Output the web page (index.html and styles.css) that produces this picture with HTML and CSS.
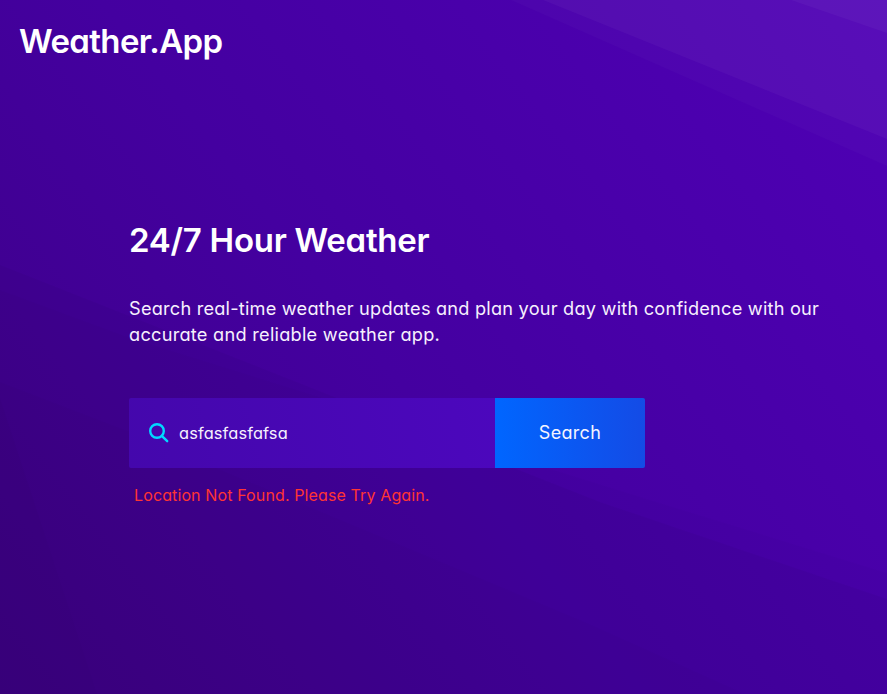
FILE: index.html
```html
<!DOCTYPE html>
<html lang="en">
<head>
<meta charset="utf-8">
<title>Weather.App</title>
<link rel="stylesheet" href="styles.css">
</head>
<body>
<svg class="backdrop" viewBox="0 0 887 694" preserveAspectRatio="none" aria-hidden="true">
  <path class="shade" d="M0 265 L600 502 L887 599 V694 H0Z"/>
  <path class="shade-soft" d="M0 290 L130 338 L650 500 L887 573 V694 H0Z"/>
  <path class="shade-soft" d="M0 382 L130 432 L587 623 L745 694 H0Z"/>
  <path class="shade-soft" d="M0 398 L97 694 H0Z"/>
  <path class="light-soft" d="M511 0 L887 166 V0Z"/>
  <path class="light" d="M543 0 L887 139 V0Z"/>
  <path class="light" d="M791 0 L887 33 V0Z"/>
</svg>
<header class="header"><span class="logo">Weather.App</span></header>
<main class="hero">
  <h1 class="title">24/7 Hour Weather</h1>
  <p class="lead"><span class="lead-first">Search real-time weather updates and plan your day with confidence with our</span><br><span class="lead-second">accurate and reliable weather app.</span></p>
  <form class="search">
    <label class="field">
      <svg class="icon" viewBox="0 0 20 20" aria-hidden="true"><circle cx="8" cy="8" r="6.8"/><path d="M12.8 12.8 L18.2 18.2"/></svg>
      <input class="input" type="text" value="asfasfasfafsa" aria-label="Location">
    </label>
    <button class="button" type="button">Search</button>
  </form>
  <p class="error">Location Not Found. Please Try Again.</p>
</main>
</body>
</html>
```
FILE: styles.css
```css
* { box-sizing: border-box; }
body {
  margin: 0;
  height: 694px;
  overflow: hidden;
  color: #fff;
  font-family: Inter, "Open Sans", sans-serif;
  font-feature-settings: "cv11";
  background: linear-gradient(52deg, #3c0084 0%, #4400a0 45%, #4f00b6 100%);
}
.backdrop { position: absolute; inset: 0; width: 100%; height: 100%; z-index: -1; }
.shade { fill: rgba(0, 0, 0, .03); }
.shade-soft { fill: rgba(0, 0, 0, .015); }
.light { fill: rgba(255, 255, 255, .035); }
.light-soft { fill: rgba(255, 255, 255, .018); }
.header { padding: 17px 19px 0; height: 83px; }
.logo { display: block; font-size: 33px; line-height: 49px; font-weight: 600; letter-spacing: -.62px; }
.hero { padding: 132px 0 0 129px; }
.title { margin: 0; font-size: 33px; line-height: 51px; font-weight: 600; letter-spacing: -.26px; }
.lead { margin: 29px 0 0; font-size: 18.2px; line-height: 26px; white-space: nowrap; color: #f6f0fd; }
.lead-first { letter-spacing: .21px; }
.lead-second { letter-spacing: .25px; }
.search { display: flex; width: 516px; height: 70px; margin-top: 51px; border-radius: 2px; overflow: hidden; }
.field { display: flex; flex: 1; align-items: center; padding-left: 20px; background: linear-gradient(75deg, #4407ac, #4c07bd); }
.icon { width: 20px; height: 20px; fill: none; stroke: #00d9ff; stroke-width: 2.4; stroke-linecap: round; }
.input { flex: 1; min-width: 0; margin-left: 10px; padding: 0; border: 0; outline: 0; background: none; color: #f6f0fd; font: 16.4px/24px Inter, sans-serif; font-feature-settings: "cv11"; letter-spacing: .12px; }
.button { width: 150px; padding: 0; border: 0; background: linear-gradient(90deg, #0066ff, #144be6); color: #f4f4ff; font: 18px/26px Inter, sans-serif; font-feature-settings: "cv11"; letter-spacing: .3px; }
.error { margin: 15px 0 0 5px; font-size: 16px; line-height: 24px; letter-spacing: .12px; color: #ff3434; }
```
